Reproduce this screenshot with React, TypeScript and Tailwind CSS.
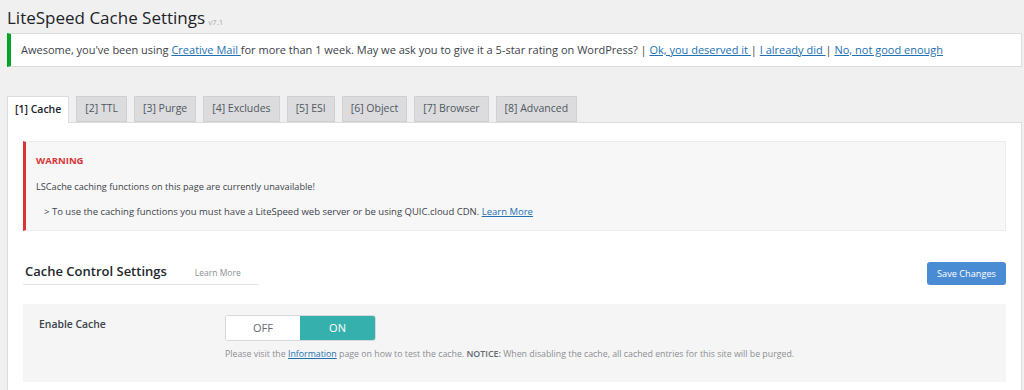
import React from "react";

const tabs = ["[1] Cache", "[2] TTL", "[3] Purge", "[4] Excludes", "[5] ESI", "[6] Object", "[7] Browser", "[8] Advanced"];

const App = () => {
  return (
    <div className="h-[390px] w-[1024px] overflow-hidden bg-[#f0f0f1] text-[#3c434a] font-['Open_Sans',sans-serif]">
      <div className="pl-[7px] pr-[2px]">
        {/* title */}
        <div className="flex items-end h-[30px] pt-[2px]">
          <h1 className="text-[17px] leading-[24px] text-[#1d2327]">LiteSpeed Cache Settings</h1>
          <span className="ml-[3px] mb-[2px] text-[8px] text-[#a7aaad]">v7.1</span>
        </div>

        {/* notice */}
        <div className="mt-[3px] flex items-center h-[34px] bg-white border border-[#dcdcde] border-l-4 border-l-[#00a32a] pl-[10px] text-[11px] text-[#3c434a] whitespace-nowrap">
          Awesome, you've been using&nbsp;<a className="text-[#2271b1] underline">Creative Mail&nbsp;</a>for more than 1 week. May we ask you to give it a 5-star rating on WordPress? |&nbsp;
          <a className="text-[#2271b1] underline">Ok, you deserved it&nbsp;</a>|&nbsp;
          <a className="text-[#2271b1] underline">I already did&nbsp;</a>|&nbsp;
          <a className="text-[#2271b1] underline">No, not good enough</a>
        </div>

        {/* tabs */}
        <div className="mt-[29px] flex items-end gap-[7px] h-[26px]">
          {tabs.map((t, i) => (
            <div
              key={t}
              className={
                i === 0
                  ? "h-[27px] px-[7px] flex items-center bg-white border border-b-0 border-[#dcdcde] text-[10.5px] font-semibold text-[#1d2327] -mb-px relative z-10"
                  : "h-[26px] px-[8px] flex items-center bg-[#dcdcde] border border-[#d0d0d3] text-[10.5px] text-[#50575e]"
              }
            >
              {t}
            </div>
          ))}
        </div>

        {/* panel */}
        <div className="bg-white border border-[#dcdcde] h-[300px] px-[15px] pt-[18px]">
          <div className="bg-[#f7f7f7] border border-[#ececec] border-l-[3px] border-l-[#d63638] pl-[10px] pt-[10px] pb-[8px] h-[90px]">
            <p className="text-[9.5px] font-bold text-[#d63638] leading-[18px]">WARNING</p>
            <p className="mt-[8px] text-[9.2px] text-[#3c434a] leading-[18px]">LSCache caching functions on this page are currently unavailable!</p>
            <p className="mt-[7px] pl-[8px] text-[9.5px] text-[#3c434a] leading-[18px]">
              &gt; To use the caching functions you must have a LiteSpeed web server or be using QUIC.cloud CDN.{" "}
              <a className="text-[#2271b1] underline">Learn More</a>
            </p>
          </div>

          <div className="mt-[30px] flex items-start justify-between h-[26px]">
            <div className="flex items-end w-[236px] border-b border-[#e3e3e3] pb-[3px] pl-[2px] whitespace-nowrap">
              <h2 className="text-[13px] font-semibold text-[#23282d] leading-[20px]">Cache Control Settings</h2>
              <span className="ml-[28px] text-[8.5px] text-[#8c8f94] leading-[16px]">Learn More</span>
            </div>
            <button className="mt-[1px] h-[23px] w-[79px] rounded-[3px] bg-[#4a8cd4] text-white text-[9.2px] flex items-center justify-center">
              Save Changes
            </button>
          </div>

          <div className="mt-[17px] bg-[#f5f5f5] h-[78px] flex pl-[16px] pt-[11px]">
            <div className="w-[186px] text-[10.4px] font-semibold text-[#3c434a] leading-[18px]">Enable Cache</div>
            <div>
              <div className="flex h-[26px] w-[151px] rounded-[3px] overflow-hidden border border-[#d8d8d8]">
                <div className="w-[74px] bg-white flex items-center justify-center text-[11px] text-[#646970]">OFF</div>
                <div className="flex-1 bg-[#36b0ad] flex items-center justify-center text-[11px] text-white">ON</div>
              </div>
              <p className="mt-[7px] text-[8.8px] text-[#8c8f94] whitespace-nowrap">
                Please visit the <a className="text-[#2271b1] underline">Information</a> page on how to test the cache.{" "}
                <strong className="font-semibold text-[#646970]">NOTICE:</strong> When disabling the cache, all cached entries for this site will be purged.
              </p>
            </div>
          </div>
        </div>
      </div>
    </div>
  );
};

export default App;
